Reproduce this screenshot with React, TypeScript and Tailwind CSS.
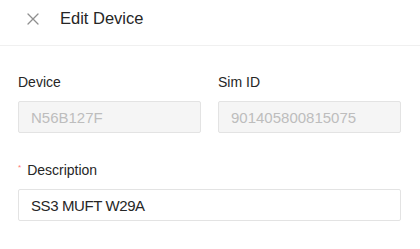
import { ReactNode } from "react";

const font = { fontFamily: '"Liberation Sans", Arial, sans-serif' };

const Field = ({ label, children, required }: { label: string; children: ReactNode; required?: boolean }) => (
  <div className="flex flex-col">
    <label className="h-[22px] leading-[22px] mb-[8px] text-[14px] text-[#262626] flex items-center">
      {required && <span className="text-[#ff7875] text-[8px] leading-none mr-[6px] -mt-[5px]">*</span>}
      {label}
    </label>
    {children}
  </div>
);

export default function App() {
  return (
    <div className="w-[420px] h-[249px] bg-white overflow-hidden" style={font}>
      <div className="h-[46px] border-b border-[#f0f0f0] flex items-start pl-[27px] pt-[7px]">
        <svg width="12" height="12" viewBox="0 0 12 12" className="text-[#8f8f8f] mt-[6px]">
          <path d="M1 1L11 11M11 1L1 11" stroke="currentColor" strokeWidth="1.3" strokeLinecap="round" />
        </svg>
        <h1 className="ml-[21px] text-[16.5px] leading-[22px] text-[#262626] font-medium">Edit Device</h1>
      </div>

      <div className="px-[18px] pt-[25px]">
        <div className="grid grid-cols-[183px_183px] gap-[17px]">
          <Field label="Device">
            <input
              disabled
              value="N56B127F"
              readOnly
              className="h-[32px] px-[12px] text-[15px] rounded-[2px] border border-[#e3e3e3] bg-[#f5f5f5] text-[#bdbdbd]"
            />
          </Field>
          <Field label="Sim ID">
            <input
              disabled
              value="901405800815075"
              readOnly
              className="h-[32px] px-[12px] text-[15px] rounded-[2px] border border-[#e3e3e3] bg-[#f5f5f5] text-[#bdbdbd]"
            />
          </Field>
        </div>

        <div className="mt-[26px]">
          <Field label="Description" required>
            <input
              defaultValue="SS3 MUFT W29A"
              className="w-[383px] h-[32px] px-[12px] text-[15px] tracking-[-0.4px] rounded-[2px] border border-[#e3e3e3] bg-white text-[#262626] outline-none"
            />
          </Field>
        </div>
      </div>
    </div>
  );
}
